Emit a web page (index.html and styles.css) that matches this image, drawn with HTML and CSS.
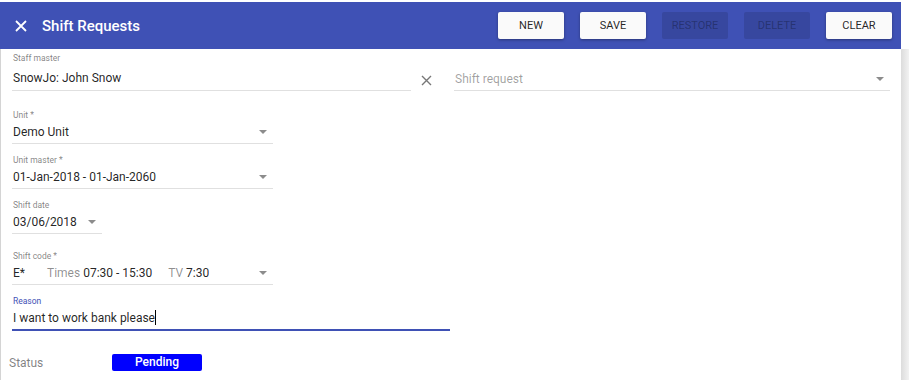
FILE: index.html
```html
<!DOCTYPE html>
<html lang="en">
<head>
  <meta charset="UTF-8">
  <title>Shift Requests</title>
  <link rel="stylesheet" href="styles.css">
</head>
<body>
  <div class="dialog">
    <header class="toolbar">
      <svg class="close" width="12" height="12" viewBox="0 0 12 12">
        <path d="M1 1 L11 11 M11 1 L1 11" stroke="#fff" stroke-width="1.8" fill="none"/>
      </svg>
      <h1>Shift Requests</h1>
      <div class="actions">
        <button class="btn">NEW</button>
        <button class="btn">SAVE</button>
        <button class="btn" disabled>RESTORE</button>
        <button class="btn" disabled>DELETE</button>
        <button class="btn">CLEAR</button>
      </div>
    </header>

    <div class="body">
      <div class="content">
        <div class="row top-row">
          <div class="field staff">
            <label>Staff master</label>
            <div class="value">SnowJo: John Snow</div>
          </div>
          <svg class="clear" width="11" height="11" viewBox="0 0 11 11">
            <path d="M1 1 L10 10 M10 1 L1 10" stroke="#777" stroke-width="1.4" fill="none"/>
          </svg>
          <div class="field request">
            <div class="value placeholder">Shift request<span class="arrow"></span></div>
          </div>
        </div>

        <div class="field unit">
          <label>Unit *</label>
          <div class="value">Demo Unit<span class="arrow"></span></div>
        </div>

        <div class="field unit">
          <label>Unit master *</label>
          <div class="value">01-Jan-2018 - 01-Jan-2060<span class="arrow"></span></div>
        </div>

        <div class="field date">
          <label>Shift date</label>
          <div class="value">03/06/2018<span class="arrow"></span></div>
        </div>

        <div class="field unit">
          <label>Shift code *</label>
          <div class="value">
            <span class="shift-code">E*</span><span class="muted">Times</span>&nbsp;07:30 - 15:30<span class="muted tv">TV</span>&nbsp;7:30<span class="arrow"></span>
          </div>
        </div>

        <div class="field reason focused">
          <label>Reason</label>
          <div class="value">I want to work bank please<span class="caret"></span></div>
        </div>

        <div class="status">
          <span class="status-label">Status</span>
          <span class="badge">Pending</span>
        </div>
      </div>
      <div class="scrollbar"></div>
    </div>
  </div>
</body>
</html>
```

FILE: styles.css
```css
body {
  margin: 0;
  font-family: Roboto, "Liberation Sans", Arial, sans-serif;
  background: #fff;
  color: rgba(0, 0, 0, 0.87);
}

.dialog {
  width: 901px;
  margin-top: 2px;
}

.toolbar {
  background: #3f51b5;
  height: 47px;
  display: flex;
  align-items: center;
  padding: 0 9px 0 15px;
  color: #fff;
}

.toolbar .close {
  margin-right: 15px;
}

.toolbar h1 {
  margin: 0;
  font-size: 15px;
  font-weight: 500;
  flex: 1;
}

.actions {
  display: flex;
  gap: 16px;
}

.btn {
  width: 66px;
  height: 27px;
  border: none;
  border-radius: 2px;
  background: #fafafa;
  color: rgba(0, 0, 0, 0.87);
  font-family: Roboto, "Liberation Sans", Arial, sans-serif;
  font-size: 11px;
  font-weight: 400;
  padding: 0;
  box-shadow: 0 1px 3px rgba(0, 0, 0, 0.35);
}

.btn:disabled {
  background: rgba(0, 0, 0, 0.12);
  color: rgba(0, 0, 0, 0.3);
  box-shadow: none;
}

.body {
  display: flex;
  height: 331px;
}

.content {
  flex: 1;
  border-left: 1px solid #d4d4d4;
  padding: 3px 0 0 11px;
}

.scrollbar {
  width: 8px;
  margin-right: -8px;
  background: linear-gradient(to right, #dcdcdc, #f2f2f2);
}

.row {
  display: flex;
  align-items: flex-end;
}

.field {
  border-bottom: 1px solid #e0e0e0;
  margin-bottom: 10px;
}

.field label {
  display: block;
  font-size: 8.5px;
  line-height: 12px;
  color: rgba(0, 0, 0, 0.5);
  padding-left: 1px;
}

.field .value {
  position: relative;
  font-size: 12px;
  line-height: 22px;
  height: 22px;
  padding-left: 1px;
  white-space: nowrap;
}

.top-row {
  margin-bottom: 18px;
}

.top-row .field {
  margin-bottom: 0;
}

.staff {
  width: 399px;
}

.staff .value {
  padding-top: 3px;
  line-height: 23px;
  height: 23px;
}

.request .value {
  line-height: 30px;
  height: 26px;
}

.clear {
  margin: 0 22px 5px 10px;
}

.request {
  width: 436px;
}

.placeholder {
  color: rgba(0, 0, 0, 0.38);
}

.unit {
  width: 261px;
}

.date {
  width: 90px;
  margin-bottom: 16px;
}

.arrow {
  position: absolute;
  right: 6px;
  top: 50%;
  margin-top: -2px;
  width: 0;
  height: 0;
  border-left: 4px solid transparent;
  border-right: 4px solid transparent;
  border-top: 4px solid rgba(0, 0, 0, 0.45);
}

.request .arrow {
  margin-top: 0;
}

.shift-code {
  display: inline-block;
  width: 34px;
}

.muted {
  color: rgba(0, 0, 0, 0.45);
}

.tv {
  margin-left: 16px;
}

.reason {
  width: 438px;
  margin-bottom: 0;
}

.focused {
  border-bottom: 2px solid #3f51b5;
}

.focused label {
  color: #3f51b5;
}

.caret {
  display: inline-block;
  width: 1px;
  height: 15px;
  background: #000;
  vertical-align: -3px;
}

.status {
  display: flex;
  align-items: center;
  margin-top: 23px;
  margin-left: -3px;
}

.status-label {
  width: 103px;
  font-size: 12px;
  color: rgba(0, 0, 0, 0.5);
}

.badge {
  width: 90px;
  height: 17px;
  line-height: 17px;
  background: #0000ff;
  color: #fff;
  border-radius: 2px;
  text-align: center;
  font-size: 12px;
  font-weight: 500;
}
```
